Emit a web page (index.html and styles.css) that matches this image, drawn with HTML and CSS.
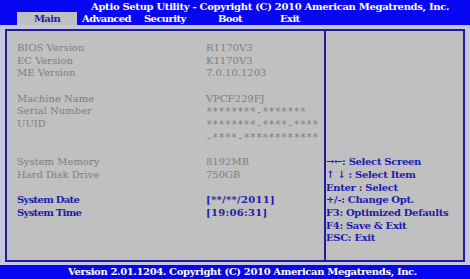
FILE: index.html
```html
<!DOCTYPE html>
<html>
<head>
<meta charset="utf-8">
<link rel="stylesheet" href="styles.css">
</head>
<body>
<div class="topbar">
  <div class="title">Aptio Setup Utility - Copyright (C) 2010 American Megatrends, Inc.</div>
  <div class="tabs">
    <div class="tab tab-main active">Main</div>
    <div class="tab tab-adv">Advanced</div>
    <div class="tab tab-sec">Security</div>
    <div class="tab tab-boot">Boot</div>
    <div class="tab tab-exit">Exit</div>
  </div>
</div>
<div class="frame">
  <div class="left">
    <div class="row"><span class="label">BIOS Version</span><span class="value">R1170V3</span></div>
    <div class="row"><span class="label">EC Version</span><span class="value">K1170V3</span></div>
    <div class="row"><span class="label">ME Version</span><span class="value">7.0.10.1203</span></div>
    <div class="row"></div>
    <div class="row"><span class="label">Machine Name</span><span class="value">VPCF229FJ</span></div>
    <div class="row"><span class="label">Serial Number</span><span class="value mask">********-*******</span></div>
    <div class="row"><span class="label">UUID</span><span class="value mask">********-****-****</span></div>
    <div class="row"><span class="label"></span><span class="value mask">-****-************</span></div>
    <div class="row"></div>
    <div class="row"><span class="label">System Memory</span><span class="value">8192MB</span></div>
    <div class="row"><span class="label">Hard Disk Drive</span><span class="value">750GB</span></div>
    <div class="row"></div>
    <div class="row sel"><span class="label">System Date</span><span class="value">[**/**/2011]</span></div>
    <div class="row sel"><span class="label">System Time</span><span class="value">[19:06:31]</span></div>
  </div>
  <div class="right">
    <div class="help">→←: Select Screen</div>
    <div class="help">↑ ↓ : Select Item</div>
    <div class="help">Enter : Select</div>
    <div class="help">+/-: Change Opt.</div>
    <div class="help">F3: Optimized Defaults</div>
    <div class="help">F4: Save &amp; Exit</div>
    <div class="help">ESC: Exit</div>
  </div>
</div>
<div class="bottombar">Version 2.01.1204. Copyright (C) 2010 American Megatrends, Inc.</div>
</body>
</html>
```
FILE: styles.css
```css
html, body {
  margin: 0;
  padding: 0;
}
body {
  width: 470px;
  height: 279px;
  overflow: hidden;
  background: #c6c6e0;
  font-family: "DejaVu Serif", "Liberation Serif", serif;
  font-size: 10px;
}
.topbar {
  background: #0606f2;
  height: 25px;
  display: flex;
  flex-direction: column;
}
.title {
  color: #ffffff;
  font-weight: bold;
  height: 12px;
  line-height: 13px;
  padding-left: 91px;
  letter-spacing: -0.32px;
  white-space: nowrap;
}
.tabs {
  display: flex;
  height: 13px;
  padding-left: 17px;
  line-height: 13px;
}
.tab {
  color: #ffffff;
  font-weight: bold;
  letter-spacing: -0.6px;
  white-space: nowrap;
  box-sizing: border-box;
  padding-left: 5px;
}
.tab.active {
  background: #c0c0c0;
  color: #1c1cb0;
  text-align: center;
  padding-left: 0;
}
.tab-main { width: 60px; }
.tab-adv { width: 62px; }
.tab-sec { width: 74px; }
.tab-boot { width: 57px; }
.tab-exit { padding-left: 10px; }
.frame {
  margin: 4px 0 0 5px;
  width: 460px;
  height: 233px;
  box-sizing: border-box;
  border: 2px solid #1e1e98;
  background: #c0c0c0;
  display: flex;
}
.left {
  width: 319px;
  flex: none;
  border-right: 2px solid #1e1e98;
  padding: 11px 0 0 10px;
  box-sizing: border-box;
}
.row {
  display: flex;
  height: 12.7px;
  line-height: 12.7px;
  color: #7e7e7e;
  white-space: nowrap;
}
.label {
  width: 189px;
  flex: none;
}
.mask {
  font-family: "DejaVu Sans Mono", monospace;
  font-size: 10.4px;
}
.row.sel {
  color: #1c1cb0;
  font-weight: bold;
}
.row.sel .label {
  letter-spacing: -0.7px;
}
.row.sel .value {
  letter-spacing: 0.3px;
}
.right {
  flex: 1;
  padding-top: 125.3px;
  padding-left: 0;
}
.help {
  height: 12.7px;
  line-height: 12.7px;
  color: #1c1cb0;
  font-weight: bold;
  letter-spacing: -0.32px;
  white-space: nowrap;
}
.bottombar {
  margin-top: 3px;
  height: 14px;
  background: #0606f2;
  color: #ffffff;
  font-weight: bold;
  line-height: 14px;
  padding-left: 68px;
  letter-spacing: -0.36px;
  white-space: nowrap;
}
```
